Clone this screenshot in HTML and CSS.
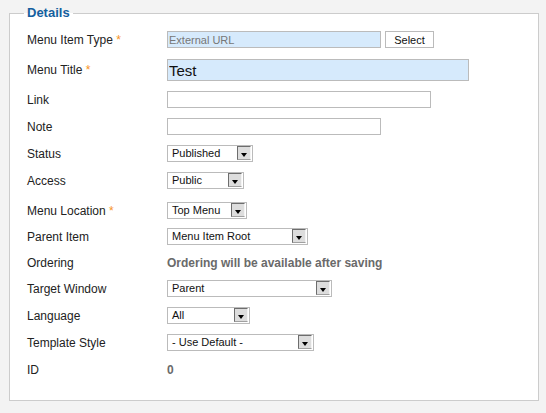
FILE: index.html
```html
<!DOCTYPE html>
<html>
<head>
    <title>Menu Item: Details</title>
    <link rel="stylesheet" href="styles.css">
</head>
<body>
    <div class="page">
        <fieldset class="panel">
            <legend>Details</legend>
            <ul class="form-list">
                <li class="row">
                    <label>Menu Item Type <span class="star">*</span></label>
                    <div class="control">
                        <input class="text readonly w-type" type="text" value="External URL" readonly>
                        <button class="btn">Select</button>
                    </div>
                </li>
                <li class="row row-title">
                    <label>Menu Title <span class="star">*</span></label>
                    <div class="control">
                        <input class="text title w-title" type="text" value="Test">
                    </div>
                </li>
                <li class="row">
                    <label>Link</label>
                    <div class="control"><input class="text w-link" type="text"></div>
                </li>
                <li class="row">
                    <label>Note</label>
                    <div class="control"><input class="text w-note" type="text"></div>
                </li>
                <li class="row">
                    <label>Status</label>
                    <div class="control"><div class="select w-status">Published<span class="arrow"></span></div></div>
                </li>
                <li class="row">
                    <label>Access</label>
                    <div class="control"><div class="select w-access">Public<span class="arrow"></span></div></div>
                </li>
                <li class="row row-location">
                    <label>Menu Location <span class="star">*</span></label>
                    <div class="control"><div class="select w-location">Top Menu<span class="arrow"></span></div></div>
                </li>
                <li class="row">
                    <label>Parent Item</label>
                    <div class="control"><div class="select w-parent">Menu Item Root<span class="arrow"></span></div></div>
                </li>
                <li class="row row-text">
                    <label>Ordering</label>
                    <div class="control"><span class="readonly-text">Ordering will be available after saving</span></div>
                </li>
                <li class="row">
                    <label>Target Window</label>
                    <div class="control"><div class="select w-target">Parent<span class="arrow"></span></div></div>
                </li>
                <li class="row">
                    <label>Language</label>
                    <div class="control"><div class="select w-language">All<span class="arrow"></span></div></div>
                </li>
                <li class="row">
                    <label>Template Style</label>
                    <div class="control"><div class="select w-template">- Use Default -<span class="arrow"></span></div></div>
                </li>
                <li class="row">
                    <label>ID</label>
                    <div class="control"><span class="readonly-text">0</span></div>
                </li>
            </ul>
        </fieldset>
    </div>
</body>
</html>
```

FILE: styles.css
```css
* {
    box-sizing: border-box;
}
body {
    margin: 0;
    background-color: #f3f3f3;
    font-family: "Liberation Sans", Arial, sans-serif;
    font-size: 12px;
    color: #222;
}
.page {
    padding: 5px 7px 11px 9px;
}
.panel {
    margin: 0;
    padding: 10px 0 12px 17px;
    border: 1px solid #cccccc;
    background-color: #fff;
}
.panel legend {
    margin-left: -3px;
    padding: 0 3px;
    font-size: 13px;
    line-height: 16px;
    font-weight: bold;
    color: #14609f;
}
.form-list {
    list-style: none;
    margin: 0;
    padding: 0;
}
.row {
    display: flex;
    align-items: center;
    min-height: 17px;
    margin-bottom: 10px;
}
.row-title {
    padding-top: 1px;
}
.row-location {
    padding-top: 3px;
    margin-bottom: 9px;
}
.row-text {
    min-height: 15px;
}
.row label {
    width: 140px;
    flex-shrink: 0;
    line-height: 14px;
}
.star {
    color: #f7931e;
}
.control {
    display: flex;
    align-items: center;
}
.text {
    height: 17px;
    margin: 0;
    padding: 0 1px;
    border: 1px solid #bbbbbb;
    background-color: #fff;
    font-family: "Liberation Sans", Arial, sans-serif;
    font-size: 11px;
    color: #222;
    outline: none;
}
.text.readonly {
    background-color: #d6eafc;
    color: #777;
}
.text.title {
    height: 22px;
    background-color: #d6eafc;
    font-size: 15px;
    color: #111;
}
.btn {
    height: 17px;
    width: 49px;
    margin-left: 4px;
    padding: 0;
    border: 1px solid #bbbbbb;
    background-color: #fff;
    font-family: "Liberation Sans", Arial, sans-serif;
    font-size: 11px;
    color: #111;
}
.select {
    position: relative;
    height: 17px;
    padding-left: 4px;
    border: 1px solid #bbbbbb;
    background-color: #fff;
    font-size: 11px;
    line-height: 15px;
    color: #111;
}
.select .arrow {
    position: absolute;
    top: 0;
    right: 1px;
    width: 14px;
    height: 14px;
    border-top: 1px solid #6d6d6d;
    border-left: 1px solid #6d6d6d;
    border-right: 1px solid #f4f4f4;
    border-bottom: 1px solid #a0a0a0;
    background-color: #dddddd;
}
.select .arrow::after {
    content: "";
    position: absolute;
    left: 3px;
    top: 6px;
    border-left: 3.5px solid transparent;
    border-right: 3.5px solid transparent;
    border-top: 4px solid #000;
}
.readonly-text {
    font-weight: bold;
    color: #6a6a6a;
}
.w-type { width: 214px; }
.w-title { width: 302px; }
.w-link { width: 264px; }
.w-note { width: 214px; }
.w-status { width: 86px; }
.w-access { width: 77px; }
.w-location { width: 80px; }
.w-parent { width: 141px; }
.w-target { width: 165px; }
.w-language { width: 83px; }
.w-template { width: 147px; }
```
